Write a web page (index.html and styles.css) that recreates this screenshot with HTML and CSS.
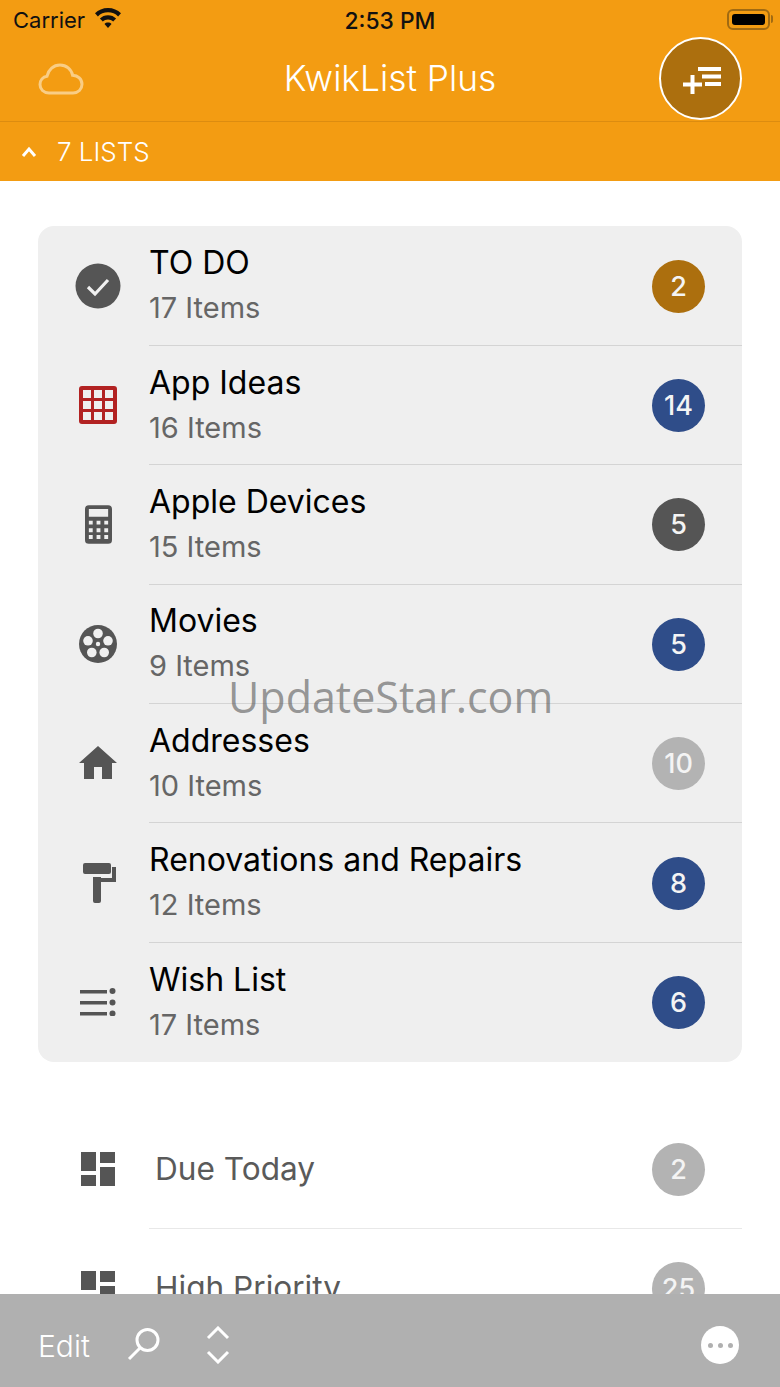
FILE: index.html
```html
<!DOCTYPE html>
<html lang="en">
<head>
<meta charset="utf-8">
<title>KwikList Plus</title>
<link rel="stylesheet" href="styles.css">
</head>
<body>
<div class="app">
  <header class="header">
    <div class="status">
      <div class="status-left">
        <span>Carrier</span>
        <svg class="wifi" viewBox="0 0 28 22"><path d="M14 1C8.800 1 4.300 3 1 6.300l2.900 3.100C6.500 6.800 10 5.300 14 5.300s7.500 1.500 10.100 4.100L27 6.300C23.700 3 19.200 1 14 1z"/><path d="M14 8.300c-3.200 0-6 1.200-8.100 3.300l2.900 3C10.100 13.300 12 12.500 14 12.500s3.900.8 5.200 2.100l2.900-3C20 9.500 17.200 8.300 14 8.300z"/><path d="M14 15.500c-1.400 0-2.600.5-3.500 1.400L14 21l3.500-4.100c-.9-.9-2.100-1.400-3.500-1.400z"/></svg>
      </div>
      <span class="clock">2:53 PM</span>
      <div class="status-right"><div class="battery"><i class="battery-fill"></i></div></div>
    </div>
    <div class="nav">
      <svg class="cloud" viewBox="0 0 46 32"><path d="M11 30C5.500 30 2 26.300 2 21.500c0-4.300 3-7.700 7-8.300C10.500 6.500 15.500 2 22 2c6.300 0 11.400 4.300 12.600 10.200 5.300.2 9.400 4 9.400 9.100 0 5-3.800 8.700-9 8.700z"/></svg>
      <h1 class="title">KwikList Plus</h1>
      <button class="add-button">
        <svg viewBox="0 0 38 27"><path d="M0 15.500h19v4H0zM7.500 8h4v19h-4z"/><path d="M15 0h23v4H15zM19 7.500h19v4H19zM22 15h16v4H22z"/></svg>
      </button>
    </div>
    <div class="lists-bar">
      <svg class="chevron-up" viewBox="0 0 16 12"><path d="M2 10l6-7 6 7"/></svg>
      <span>7 LISTS</span>
    </div>
  </header>

  <main class="content">
    <section class="panel panel-lists">
      <div class="row">
        <div class="row-icon"><svg class="ico-check" viewBox="0 0 46 46"><circle cx="23" cy="23" r="22.500" fill="#555"/><path d="M13 24l7 7 13-14" fill="none" stroke="#f0f0f0" stroke-width="3.200"/></svg></div>
        <div class="row-text"><div class="row-title">TO DO</div><div class="row-sub">17 Items</div></div>
        <span class="badge badge-amber">2</span>
      </div>
      <div class="row">
        <div class="row-icon"><svg class="ico-38" viewBox="0 0 38 38"><path fill="#b22222" fill-rule="evenodd" d="M3 0h32a3 3 0 0 1 3 3v32a3 3 0 0 1-3 3H3a3 3 0 0 1-3-3V3a3 3 0 0 1 3-3zM4 4v8h8V4zm11 0v8h8V4zm11 0v8h8V4zM4 15v8h8v-8zm11 0v8h8v-8zm11 0v8h8v-8zM4 26v8h8v-8zm11 0v8h8v-8zm11 0v8h8v-8z"/></svg></div>
        <div class="row-text"><div class="row-title">App Ideas</div><div class="row-sub">16 Items</div></div>
        <span class="badge badge-navy">14</span>
      </div>
      <div class="row">
        <div class="row-icon"><svg class="ico-calc" viewBox="0 0 28 40"><path fill="#555" fill-rule="evenodd" d="M4 0h20a4 4 0 0 1 4 4v32a4 4 0 0 1-4 4H4a4 4 0 0 1-4-4V4a4 4 0 0 1 4-4zM4 4v8h20V4zM4 16v4h4v-4zm8 0v4h4v-4zm8 0v4h4v-4zM4 24v4h4v-4zm8 0v4h4v-4zm8 0v4h4v-4zM4 31v4h4v-4zm8 0v4h4v-4zm8 0v4h4v-4z"/></svg></div>
        <div class="row-text"><div class="row-title">Apple Devices</div><div class="row-sub">15 Items</div></div>
        <span class="badge badge-grey">5</span>
      </div>
      <div class="row">
        <div class="row-icon"><svg class="ico-38" viewBox="0 0 38 38"><circle cx="19" cy="19" r="19" fill="#555"/><g fill="#f0f0f0"><circle cx="19" cy="8.500" r="4.800"/><circle cx="29" cy="15.800" r="4.800"/><circle cx="25.200" cy="27.500" r="4.800"/><circle cx="12.800" cy="27.500" r="4.800"/><circle cx="9" cy="15.800" r="4.800"/><circle cx="19" cy="19" r="2.200"/></g></svg></div>
        <div class="row-text"><div class="row-title">Movies</div><div class="row-sub">9 Items</div></div>
        <span class="badge badge-navy">5</span>
      </div>
      <div class="row">
        <div class="row-icon"><svg class="ico-home" viewBox="0 0 38 33"><path fill="#555" d="M19 0L0 17h5v16h10V21h8v12h10V17h5z"/></svg></div>
        <div class="row-text"><div class="row-title">Addresses</div><div class="row-sub">10 Items</div></div>
        <span class="badge badge-light">10</span>
      </div>
      <div class="row">
        <div class="row-icon"><svg class="ico-roller" viewBox="0 0 33 40"><path fill="#555" d="M2 0h24a2 2 0 0 1 2 2v7a2 2 0 0 1-2 2H2a2 2 0 0 1-2-2V2a2 2 0 0 1 2-2zM29 4h4v15H14v-4h15zM10 14h8v24a2 2 0 0 1-2 2h-4a2 2 0 0 1-2-2z"/></svg></div>
        <div class="row-text"><div class="row-title">Renovations and Repairs</div><div class="row-sub">12 Items</div></div>
        <span class="badge badge-navy">8</span>
      </div>
      <div class="row">
        <div class="row-icon"><svg class="ico-wish" viewBox="0 0 36 28"><g fill="#555"><rect x="0" y="2" width="27" height="3.500"/><rect x="0" y="13" width="27" height="3.500"/><rect x="0" y="24" width="27" height="3.500"/><circle cx="32.500" cy="3" r="3"/><circle cx="32.500" cy="14.500" r="3"/><circle cx="32.500" cy="25.500" r="3"/></g></svg></div>
        <div class="row-text"><div class="row-title">Wish List</div><div class="row-sub">17 Items</div></div>
        <span class="badge badge-navy">6</span>
      </div>
    </section>

    <section class="panel panel-smart">
      <div class="row">
        <div class="row-icon"><svg class="ico-dash" viewBox="0 0 34 34"><path fill="#555" d="M0 0h15v19H0zM19 0h15v11H19zM19 15h15v19H19zM0 23h15v11H0z"/></svg></div>
        <div class="row-text"><div class="row-label">Due Today</div></div>
        <span class="badge badge-light">2</span>
      </div>
      <div class="row">
        <div class="row-icon"><svg class="ico-dash" viewBox="0 0 34 34"><path fill="#555" d="M0 0h15v19H0zM19 0h15v11H19zM19 15h15v19H19zM0 23h15v11H0z"/></svg></div>
        <div class="row-text"><div class="row-label">High Priority</div></div>
        <span class="badge badge-light">25</span>
      </div>
    </section>
  </main>

  <footer class="toolbar">
    <span class="edit">Edit</span>
    <svg class="search" viewBox="0 0 34 34"><circle cx="20.500" cy="13" r="10.500"/><path d="M13 21L2 32"/></svg>
    <svg class="updown" viewBox="0 0 24 38"><path d="M2 12l10-10 10 10M2 26l10 10 10-10"/></svg>
    <div class="more"><i></i><i></i><i></i></div>
  </footer>

  <div class="watermark">UpdateStar.com</div>
</div>
</body>
</html>
```

FILE: styles.css
```css
* { box-sizing: border-box; }

html, body {
  margin: 0;
  padding: 0;
  background: #fff;
}

.app {
  position: relative;
  width: 780px;
  height: 1387px;
  display: flex;
  flex-direction: column;
  overflow: hidden;
  font-family: Inter, Roboto, "Liberation Sans", sans-serif;
}

/* Orange header */
.header {
  height: 181px;
  flex: none;
  background: #f39c12;
  display: flex;
  flex-direction: column;
}

.status {
  height: 40px;
  flex: none;
  padding: 0 10px;
  display: grid;
  grid-template-columns: 1fr auto 1fr;
  align-items: center;
  font-size: 22px;
  color: #111;
}

.status-left {
  margin-left: 3px;
  display: flex;
  align-items: center;
  gap: 9px;
}

.status-right {
  display: flex;
  justify-content: flex-end;
}

.wifi {
  width: 28px;
  height: 22px;
  fill: #111;
  margin-top: -4px;
}

.clock {
  font-size: 22.8px;
  font-weight: 500;
}

.battery {
  position: relative;
  width: 43px;
  height: 21px;
  margin-top: -2px;
  padding: 3px;
  border: 2px solid #a06a12;
  border-radius: 6px;
}

.battery::after {
  content: "";
  position: absolute;
  right: -5px;
  top: 4px;
  width: 2px;
  height: 8px;
  background: #a06a12;
  border-radius: 0 2px 2px 0;
}

.battery-fill {
  display: block;
  width: 100%;
  height: 100%;
  background: #000;
  border-radius: 3px;
}

.nav {
  height: 82px;
  flex: none;
  padding: 0 38px 4px;
  display: grid;
  grid-template-columns: 1fr auto 1fr;
  align-items: center;
  border-bottom: 1px solid #dc8c10;
}

.cloud {
  width: 46px;
  height: 32px;
  fill: none;
  stroke: #f9cd85;
  stroke-width: 3;
}

.title {
  margin: 0;
  font-size: 35.3px;
  font-weight: 300;
  color: #fff;
}

.add-button {
  width: 83px;
  height: 83px;
  margin: -4px 0;
  padding: 4px 0 0 2px;
  justify-self: end;
  display: flex;
  align-items: center;
  justify-content: center;
  background: #ac6f0e;
  border: 2px solid #fff;
  border-radius: 50%;
}

.add-button svg {
  width: 38px;
  height: 27px;
  fill: #fff;
}

.lists-bar {
  flex: 1;
  padding-left: 21px;
  display: flex;
  align-items: center;
  gap: 20px;
  font-size: 26px;
  font-weight: 300;
  color: #fff;
}

.chevron-up {
  width: 16px;
  height: 12px;
  fill: none;
  stroke: #fff;
  stroke-width: 3;
}

/* List panels */
.content {
  flex: 1;
  min-height: 0;
  padding: 45px 38px 0;
  overflow: hidden;
}

.panel {
  border-radius: 16px;
}

.panel-lists {
  background: #efefef;
}

.panel-smart {
  margin-top: 47.6px;
}

.row {
  position: relative;
  height: 119.4px;
  display: flex;
  align-items: center;
  padding-right: 37px;
}

.row + .row::before {
  content: "";
  position: absolute;
  left: 111px;
  right: 0;
  top: -0.5px;
  height: 1px;
  background: #d4d4d4;
}

.panel-smart .row + .row::before {
  background: #e8e8e8;
}

.row-icon {
  width: 120px;
  flex: none;
  display: flex;
  justify-content: center;
  align-items: center;
}

.row-icon svg { display: block; }

.ico-check { width: 46px; height: 46px; }
.ico-38 { width: 38px; height: 38px; }
.ico-calc { width: 27px; height: 39px; }
.ico-home { width: 38px; height: 33px; margin-top: -1px; }
.ico-roller { width: 33px; height: 40px; margin-left: 3px; }
.ico-wish { width: 36px; height: 28px; }
.ico-dash { width: 34px; height: 34px; }

.row-text {
  flex: 1;
  min-width: 0;
  margin-left: -9px;
}

.row-title {
  font-size: 32px;
  line-height: 43px;
  color: #000;
}

.row-sub {
  margin-top: 1px;
  font-size: 29px;
  line-height: 45px;
  color: #666;
}

.row-label {
  margin-left: 6px;
  font-size: 31.6px;
  line-height: 44px;
  color: #5a5a5a;
}

.badge {
  width: 53px;
  height: 53px;
  margin-top: 1px;
  flex: none;
  display: flex;
  align-items: center;
  justify-content: center;
  border-radius: 50%;
  font-size: 27px;
  font-weight: 500;
  color: #f4f4f4;
}

.badge-amber { background: #ac6f0e; }
.badge-navy { background: #2f4d89; }
.badge-grey { background: #555; }
.badge-light { background: #b3b3b3; }

/* Bottom toolbar */
.toolbar {
  height: 93px;
  flex: none;
  padding: 10px 41px 0 38px;
  display: flex;
  align-items: center;
  background: #b0b0b0;
  color: #fff;
}

.edit {
  font-size: 30px;
  font-weight: 300;
}

.search {
  width: 34px;
  height: 34px;
  margin-left: 37px;
  margin-top: -4px;
  fill: none;
  stroke: #fff;
  stroke-width: 3;
}

.updown {
  width: 26px;
  height: 38px;
  margin-left: 44px;
  margin-top: -1px;
  fill: none;
  stroke: #fff;
  stroke-width: 3;
}

.more {
  width: 38px;
  height: 38px;
  margin-left: auto;
  margin-top: -1px;
  display: flex;
  align-items: center;
  justify-content: center;
  gap: 5px;
  background: #fff;
  border-radius: 50%;
}

.more i {
  width: 5px;
  height: 5px;
  background: #b0b0b0;
  border-radius: 50%;
}

.watermark {
  position: absolute;
  left: 228px;
  top: 669px;
  font-family: "Open Sans", sans-serif;
  font-size: 43px;
  line-height: 56px;
  color: rgba(90, 90, 90, 0.62);
  white-space: nowrap;
}
```
